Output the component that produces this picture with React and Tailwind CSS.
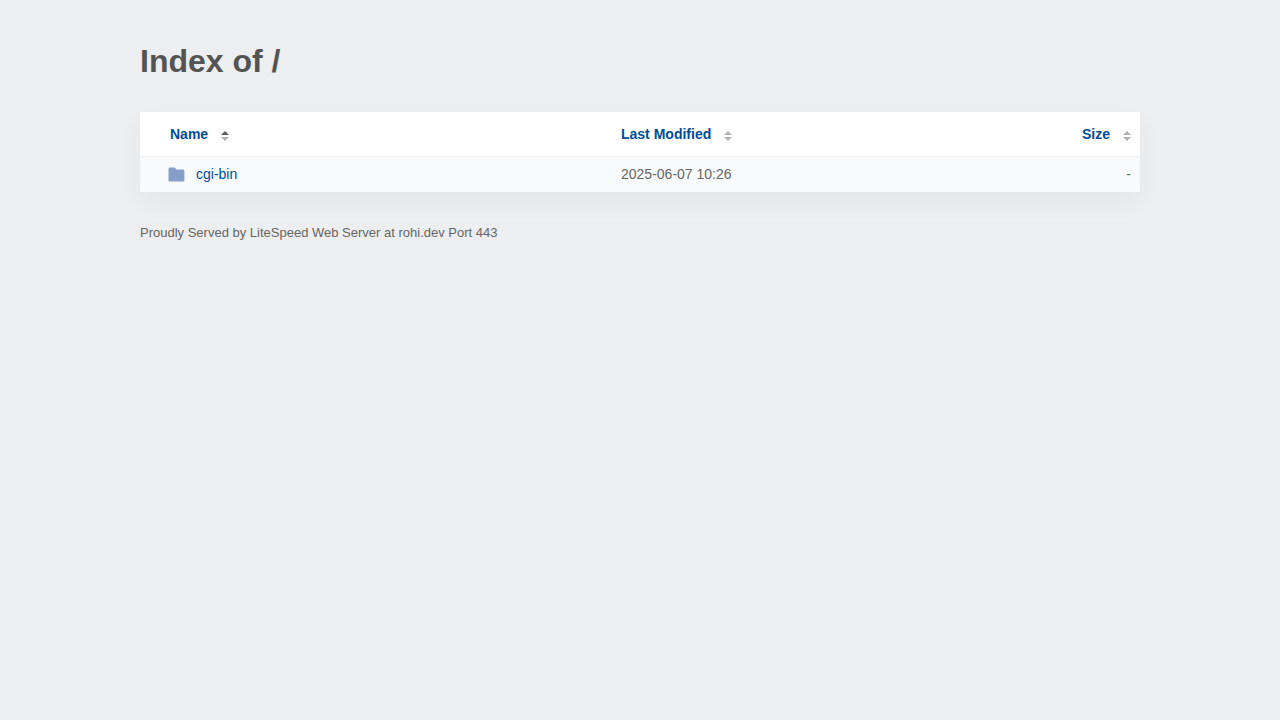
import React, { useState } from 'react';

const entries = [
    { name: 'cgi-bin', modified: '2025-06-07 10:26', size: '-' },
];

const columns = [
    { key: 'name', label: 'Name', className: 'w-[47%] pl-[30px] pr-2 text-left' },
    { key: 'modified', label: 'Last Modified', className: 'pl-[11px] pr-2 text-left' },
    { key: 'size', label: 'Size', className: 'w-1/5 pl-2 pr-[9px] text-right' },
];

const SortIcon = ({ direction }) => (
    <svg width="8" height="10" viewBox="0 0 8 10" className="mt-1" aria-hidden="true">
        <path d="M0 4L4 0L8 4Z" fill={direction === 'asc' ? '#5c5c5c' : '#b0b0b0'} />
        <path d="M0 6L4 10L8 6Z" fill={direction === 'desc' ? '#5c5c5c' : '#b0b0b0'} />
    </svg>
);

const FolderIcon = () => (
    <svg width="17" height="15" viewBox="0 0 17 15" className="shrink-0" aria-hidden="true">
        <path
            d="M2 0.5H6C6.5 0.5 6.9 0.7 7.2 1.1L8.3 2.4H14.8C15.7 2.4 16.4 3.1 16.4 4V13C16.4 13.9 15.7 14.6 14.8 14.6H2C1.1 14.6 0.5 13.9 0.5 13V2C0.5 1.1 1.1 0.5 2 0.5Z"
            fill="#879fc7"
        />
    </svg>
);

const App = () => {
    const [sort, setSort] = useState({ key: 'name', direction: 'asc' });

    const handleSort = (key) => {
        setSort((prev) => ({
            key,
            direction: prev.key === key && prev.direction === 'asc' ? 'desc' : 'asc',
        }));
    };

    const sorted = [...entries].sort((a, b) => {
        const order = a[sort.key].localeCompare(b[sort.key]);
        return sort.direction === 'asc' ? order : -order;
    });

    return (
        <div className="min-h-screen bg-[#edeef0] px-5 py-10 font-['Liberation_Sans',Arial,sans-serif] text-sm text-[#666]">
            <main className="mx-auto max-w-[1000px]">
                <h1 className="mb-[30px] text-[32px] leading-[42px] font-bold text-[#545454]">Index of /</h1>

                <table className="w-full table-fixed border-collapse bg-white shadow-[0_10px_24px_rgba(0,0,0,0.04)]">
                    <thead>
                        <tr className="h-11 border-b border-[#eff1f3]">
                            {columns.map((column) => (
                                <th key={column.key} className={column.className}>
                                    <button
                                        type="button"
                                        onClick={() => handleSort(column.key)}
                                        className="inline-flex cursor-pointer items-center gap-[13px] align-middle font-bold text-[#004c99] hover:underline"
                                    >
                                        {column.label}
                                        <SortIcon direction={sort.key === column.key ? sort.direction : null} />
                                    </button>
                                </th>
                            ))}
                        </tr>
                    </thead>
                    <tbody>
                        {sorted.map((entry) => (
                            <tr key={entry.name} className="h-9 bg-[#f9fafc]">
                                <td className="pl-7">
                                    <a href="/cgi-bin/" className="flex items-center gap-[11px] text-[#004c99] hover:underline">
                                        <FolderIcon />
                                        {entry.name}
                                    </a>
                                </td>
                                <td className="pl-[11px]">{entry.modified}</td>
                                <td className="pr-[9px] text-right">{entry.size}</td>
                            </tr>
                        ))}
                    </tbody>
                </table>

                <footer className="mt-[31px] text-[13px] leading-5">
                    Proudly Served by LiteSpeed Web Server at rohi.dev Port 443
                </footer>
            </main>
        </div>
    );
};

export default App;
